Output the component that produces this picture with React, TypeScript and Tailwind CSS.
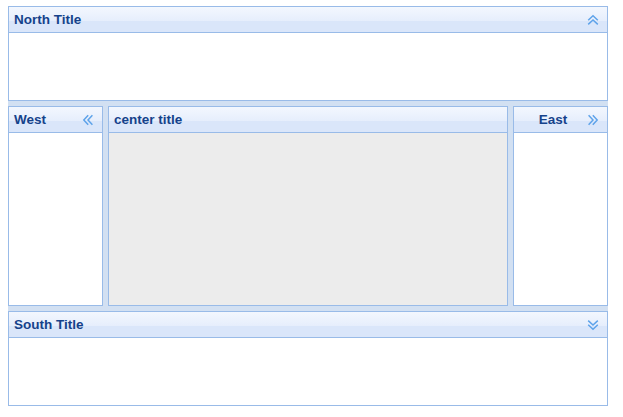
import React, {FC} from "react";

type Dir = "up" | "down" | "left" | "right";

const Chevrons: FC<{dir: Dir}> = ({dir}) => {
    const rot = {up: 0, right: 90, down: 180, left: 270}[dir];
    return (
        <svg width="12" height="12" viewBox="0 0 12 12" className="shrink-0">
            <g transform={`rotate(${rot} 6 6)`} fill="none" stroke="#5ea3ea" strokeWidth="1.5">
                <path d="M1.2 6.2 L6 1.8 L10.8 6.2" />
                <path d="M1.2 10.4 L6 6 L10.8 10.4" />
            </g>
        </svg>
    );
};

interface PanelProps {
    title: string
    dir?: Dir
    centerTitle?: boolean
    bodyClass?: string
    className?: string
}

const Panel: FC<PanelProps> = ({title, dir, centerTitle, bodyClass = "bg-white", className = ""}) => (
    <div className={`flex flex-col border border-[#99bbe8] ${className}`}>
        <div className="flex items-center h-[26px] shrink-0 border-b border-[#99bbe8] pl-[5px] pr-[8px] bg-[linear-gradient(to_bottom,#f3f7fe_0%,#e6eefc_55%,#dae6fa_58%,#dae6fa_100%)]">
            <span className={`flex-1 text-[13.5px] font-bold text-[#15428b] leading-none ${centerTitle ? "text-center" : ""}`}>
                {title}
            </span>
            {dir && <Chevrons dir={dir} />}
        </div>
        <div className={`flex-1 ${bodyClass}`} />
    </div>
);

const App: FC = () => {
    return (
        <div className="w-[623px] h-[417px] bg-white pt-[6px] pl-[8px]" style={{fontFamily: '"Liberation Sans", Arial, sans-serif'}}>
            <div className="w-[600px] h-[400px] bg-[#d2e0f2] flex flex-col gap-[5px]">
                <Panel title="North Title" dir="up" className="h-[95px]" />
                <div className="flex gap-[5px] h-[200px]">
                    <Panel title="West" dir="left" className="w-[95px]" />
                    <Panel title="center title" className="flex-1" bodyClass="bg-[#ececec]" />
                    <Panel title="East" dir="right" centerTitle className="w-[95px]" />
                </div>
                <Panel title="South Title" dir="down" className="h-[95px]" />
            </div>
        </div>
    );
};

export default App
